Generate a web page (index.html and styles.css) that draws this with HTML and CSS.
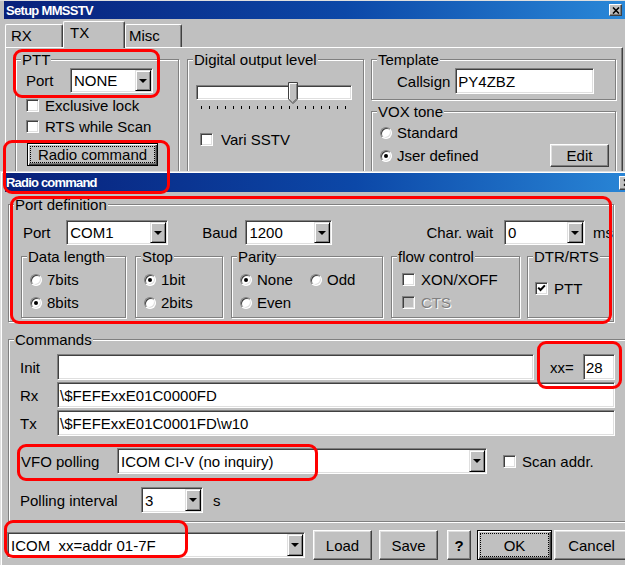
FILE: index.html
```html
<!DOCTYPE html>
<html lang="en">
<head>
    <meta charset="UTF-8">
    <title>Setup MMSSTV - Radio command</title>
    <link rel="stylesheet" href="styles.css">
</head>
<body>
    <!-- back window: Setup MMSSTV, TX tab -->
    <div class="win win-setup">
        <div class="titlebar">
            <span>Setup MMSSTV</span>
            <span class="close">
                <svg width="8" height="7" viewBox="0 0 8 7"><path d="M1 0.5l6 6M7 0.5l-6 6" stroke="#000" stroke-width="1.6"/></svg>
            </span>
        </div>
        <div class="tabs">
            <div class="tab tab-rx">RX</div>
            <div class="tab tab-tx active">TX</div>
            <div class="tab tab-misc">Misc</div>
        </div>
        <div class="panel">
            <fieldset class="grp g-ptt">
                <legend>PTT</legend>
                <div class="gbody">
                    <div class="row h25">
                        <span class="lbl-ptt">Port</span>
                        <div class="combo cb-none"><span class="val">NONE</span><span class="drop"></span></div>
                    </div>
                    <div class="check-row first"><span class="chk"></span><span>Exclusive lock</span></div>
                    <div class="check-row"><span class="chk"></span><span>RTS while Scan</span></div>
                    <div class="btn default btn-radio"><span class="focus">Radio command</span></div>
                </div>
            </fieldset>
            <fieldset class="grp g-level">
                <legend>Digital output level</legend>
                <div class="gbody">
                    <div class="track">
                        <svg class="thumb" width="10" height="22" viewBox="0 0 10 22">
                            <path d="M0.5 0.5H9.5V17L5 21.5L0.5 17Z" fill="#c0c0c0" stroke="#404040"/>
                            <path d="M1.5 17V1.5H8.5" fill="none" stroke="#fff"/>
                            <path d="M8.5 2V16.6L5 20" fill="none" stroke="#808080"/>
                        </svg>
                    </div>
                    <div class="ticks"></div>
                    <div class="check-row vari"><span class="chk"></span><span>Vari SSTV</span></div>
                </div>
            </fieldset>
            <div class="col-right">
                <fieldset class="grp g-template">
                    <legend>Template</legend>
                    <div class="gbody row h26">
                        <span>Callsign</span>
                        <div class="edit ed-call">PY4ZBZ</div>
                    </div>
                </fieldset>
                <fieldset class="grp g-vox">
                    <legend>VOX tone</legend>
                    <div class="gbody">
                        <div class="radio-row"><span class="rad"></span><span>Standard</span></div>
                        <div class="radio-row"><span class="rad on"></span><span>Jser defined</span><div class="btn btn-edit">Edit</div></div>
                    </div>
                </fieldset>
            </div>
        </div>
    </div>

    <!-- front window: Radio command -->
    <div class="win win-radio">
        <div class="titlebar">
            <span>Radio command</span>
            <span class="close">
                <svg width="8" height="7" viewBox="0 0 8 7"><path d="M1 0.5l6 6M7 0.5l-6 6" stroke="#000" stroke-width="1.6"/></svg>
            </span>
        </div>
        <div class="dlg-body">
            <fieldset class="grp g-portdef">
                <legend>Port definition</legend>
                <div class="gbody">
                    <div class="row h25">
                        <span class="lbl-port">Port</span>
                        <div class="combo cb-com"><span class="val">COM1</span><span class="drop"></span></div>
                        <span class="lbl-baud">Baud</span>
                        <div class="combo cb-baud"><span class="val">1200</span><span class="drop"></span></div>
                        <span class="lbl-wait">Char. wait</span>
                        <div class="combo cb-wait"><span class="val">0</span><span class="drop"></span></div>
                        <span class="lbl-ms">ms</span>
                    </div>
                    <div class="subgroups">
                        <fieldset class="grp sub g-data">
                            <legend>Data length</legend>
                            <div class="gbody">
                                <div class="radio-row"><span class="rad"></span><span>7bits</span></div>
                                <div class="radio-row"><span class="rad on"></span><span>8bits</span></div>
                            </div>
                        </fieldset>
                        <fieldset class="grp sub g-stop">
                            <legend>Stop</legend>
                            <div class="gbody">
                                <div class="radio-row"><span class="rad on"></span><span>1bit</span></div>
                                <div class="radio-row"><span class="rad"></span><span>2bits</span></div>
                            </div>
                        </fieldset>
                        <fieldset class="grp sub g-parity">
                            <legend>Parity</legend>
                            <div class="gbody">
                                <div class="radio-row">
                                    <span class="opt-none"><span class="rad on"></span><span>None</span></span>
                                    <span class="rad"></span><span>Odd</span>
                                </div>
                                <div class="radio-row"><span class="rad"></span><span>Even</span></div>
                            </div>
                        </fieldset>
                        <fieldset class="grp sub g-flow">
                            <legend>flow control</legend>
                            <div class="gbody">
                                <div class="radio-row"><span class="chk"></span><span>XON/XOFF</span></div>
                                <div class="radio-row disabled"><span class="chk off"></span><span>CTS</span></div>
                            </div>
                        </fieldset>
                        <fieldset class="grp sub g-dtr">
                            <legend>DTR/RTS</legend>
                            <div class="gbody">
                                <div class="radio-row ptt">
                                    <span class="chk">
                                        <svg width="11" height="11" viewBox="0 0 11 11"><path d="M2.2 4.6l2.3 2.4 4.4-4.6" fill="none" stroke="#000" stroke-width="2"/></svg>
                                    </span>
                                    <span>PTT</span>
                                </div>
                            </div>
                        </fieldset>
                    </div>
                </div>
            </fieldset>

            <fieldset class="grp g-cmd">
                <legend>Commands</legend>
                <div class="gbody">
                    <div class="row h26">
                        <span class="lbl-cmd">Init</span>
                        <div class="edit ed-init"></div>
                        <span class="lbl-xx">xx=</span>
                        <div class="edit ed-xx">28</div>
                    </div>
                    <div class="row h26 next">
                        <span class="lbl-cmd">Rx</span>
                        <div class="edit ed-long">\$FEFExxE01C0000FD</div>
                    </div>
                    <div class="row h26 next">
                        <span class="lbl-cmd">Tx</span>
                        <div class="edit ed-long">\$FEFExxE01C0001FD\w10</div>
                    </div>
                    <div class="row h26 vfo">
                        <span class="lbl-vfo">VFO polling</span>
                        <div class="combo cb-vfo"><span class="val">ICOM CI-V (no inquiry)</span><span class="drop"></span></div>
                        <span class="chk chk-scan"></span>
                        <span>Scan addr.</span>
                    </div>
                    <div class="row h26 poll">
                        <span class="lbl-poll">Polling interval</span>
                        <div class="combo cb-poll"><span class="val">3</span><span class="drop"></span></div>
                        <span class="lbl-s">s</span>
                    </div>
                </div>
            </fieldset>

            <div class="row bottom">
                <div class="combo cb-icom"><span class="val">ICOM  xx=addr 01-7F</span><span class="drop"></span></div>
                <div class="btn btn-load">Load</div>
                <div class="btn btn-save">Save</div>
                <div class="btn btn-help">?</div>
                <div class="btn default btn-ok"><span class="focus">OK</span></div>
                <div class="btn btn-cancel">Cancel</div>
            </div>
        </div>
    </div>

    <!-- red annotation frames -->
    <div class="mark mark-ptt"></div>
    <div class="mark mark-cmd"></div>
    <div class="mark mark-portdef"></div>
    <div class="mark mark-xx"></div>
    <div class="mark mark-vfo"></div>
    <div class="mark mark-icom"></div>
</body>
</html>
```

FILE: styles.css
```css
body {
    margin: 0;
    width: 625px;
    height: 565px;
    overflow: hidden;
    position: relative;
    background: #c0c0c0;
    font-family: "Liberation Sans", Arial, sans-serif;
    font-size: 15px;
    color: #000;
}

/* windows */
.win {
    position: absolute;
    box-sizing: border-box;
    background: #c0c0c0;
}

.win-setup {
    left: 0;
    top: 0;
    width: 630px;
    height: 230px;
    padding: 0 4px;
    border-top: 1px solid #dfdfdf;
}

.win-radio {
    left: 0;
    top: 171px;
    width: 642px;
    height: 420px;
    padding: 1px 0 0 4px;
    border-top: 1px solid #dfdfdf;
    border-left: 1px solid #dfdfdf;
    box-shadow: inset 1px 1px #fff;
    z-index: 2;
}

.titlebar {
    display: flex;
    align-items: center;
    justify-content: space-between;
    height: 18px;
    padding-left: 2px;
    background: linear-gradient(to right, #08207a, #0c48a8 55%, #2a88d8);
    color: #fff;
    font-size: 13px;
    font-weight: bold;
    letter-spacing: -0.7px;
}

.win-radio .titlebar {
    height: 19px;
    padding-left: 1px;
    letter-spacing: -0.8px;
}

.close {
    display: flex;
    align-items: center;
    justify-content: center;
    box-sizing: border-box;
    width: 13px;
    height: 12px;
    margin-right: 4px;
    background: #c0c0c0;
    border: 1px solid;
    border-color: #fff #404040 #404040 #fff;
    box-shadow: inset -1px -1px #808080;
}

.win-radio .close {
    width: 16px;
    height: 14px;
    margin-right: 7px;
}

/* tabs */
.tabs {
    display: flex;
    align-items: flex-end;
    height: 28px;
    padding-left: 1px;
}

.tab {
    box-sizing: border-box;
    height: 23px;
    padding-top: 2px;
    line-height: 17px;
    background: #c0c0c0;
    border-top: 1px solid #fff;
    border-left: 1px solid #fff;
    border-right: 1px solid #404040;
    border-radius: 2px 2px 0 0;
    box-shadow: inset -1px 0 #808080;
}

.tab-rx {
    width: 58px;
    padding-left: 5px;
}

.tab-tx {
    width: 62px;
    padding-left: 6px;
}

.tab-misc {
    width: 57px;
    padding-left: 3px;
}

.tab.active {
    height: 27px;
    margin-bottom: -1px;
    position: relative;
    z-index: 1;
}

.panel {
    display: flex;
    align-items: flex-start;
    height: 180px;
    margin: 0 3px 0 1px;
    padding: 3px 0 0 9px;
    border: 1px solid;
    border-color: #fff #404040 #404040 #fff;
    box-shadow: inset -1px -1px #808080;
}

/* group boxes */
.grp {
    flex: none;
    margin: 0;
    padding: 0;
    min-width: 0;
    box-sizing: border-box;
    border: 1px solid #808080;
    box-shadow: inset 1px 1px #fff, 1px 1px #fff;
}

.grp legend {
    margin-left: 5px;
    padding: 0 1px;
    line-height: 17px;
    background: #c0c0c0;
}

.row {
    display: flex;
    align-items: center;
}

.h25 {
    height: 25px;
}

.h26 {
    height: 26px;
}

/* sunken controls */
.combo, .edit, .track, .chk, .rad {
    box-sizing: border-box;
    background: #fff;
    border: 1px solid;
    border-color: #808080 #fff #fff #808080;
    box-shadow: inset 1px 1px #404040, inset -1px -1px #dfdfdf;
}

.combo {
    display: flex;
    flex: none;
    padding: 1px;
}

.combo .val {
    flex: 1;
    display: flex;
    align-items: center;
    padding-left: 2px;
    white-space: pre;
}

.drop {
    display: flex;
    align-items: center;
    justify-content: center;
    box-sizing: border-box;
    width: 16px;
    background: #c0c0c0;
    border: 1px solid;
    border-color: #dfdfdf #000 #000 #dfdfdf;
    box-shadow: inset 1px 1px #fff, inset -1px -1px #808080;
}

.drop::after {
    content: "";
    border-style: solid;
    border-width: 4px 4px 0;
    border-color: #000 transparent transparent;
}

.edit {
    display: flex;
    align-items: center;
    flex: none;
    height: 26px;
    padding-left: 2px;
}

.chk {
    display: flex;
    align-items: center;
    justify-content: center;
    flex: none;
    width: 13px;
    height: 13px;
    margin-right: 6px;
}

.chk.off {
    background: #c0c0c0;
}

.rad {
    display: flex;
    align-items: center;
    justify-content: center;
    flex: none;
    width: 12px;
    height: 12px;
    margin-right: 5px;
    border-radius: 50%;
}

.rad.on::after {
    content: "";
    width: 4px;
    height: 4px;
    border-radius: 50%;
    background: #000;
}

.check-row, .radio-row {
    display: flex;
    align-items: center;
}

.check-row {
    height: 21px;
}

.radio-row {
    height: 23px;
}

.disabled {
    color: #808080;
    text-shadow: 1px 1px #fff;
}

/* buttons */
.btn {
    display: flex;
    align-items: center;
    justify-content: center;
    flex: none;
    box-sizing: border-box;
    background: #c0c0c0;
    border: 1px solid;
    border-color: #fff #404040 #404040 #fff;
    box-shadow: inset -1px -1px #808080, inset 1px 1px #dfdfdf;
}

.btn.default {
    align-items: stretch;
    padding: 2px;
    border-color: #000;
    box-shadow: inset 1px 1px #fff, inset -1px -1px #404040, inset -2px -2px #808080;
}

.focus {
    flex: 1;
    display: flex;
    align-items: center;
    justify-content: center;
    border: 1px dotted #000;
}

/* Setup: PTT */
.g-ptt {
    width: 164px;
    height: 160px;
}

.g-ptt .gbody {
    padding-left: 10px;
}

.lbl-ptt {
    width: 44px;
}

.cb-none {
    width: 83px;
    height: 25px;
}

.check-row.first {
    margin-top: 2px;
}

.btn-radio {
    width: 131px;
    height: 23px;
    margin: 6px 0 0 1px;
}

/* Setup: level */
.g-level {
    width: 177px;
    height: 160px;
    margin-left: 8px;
}

.g-level .gbody {
    padding-left: 8px;
}

.track {
    position: relative;
    width: 156px;
    height: 15px;
    margin-top: 17px;
}

.thumb {
    position: absolute;
    left: 91px;
    top: -4px;
}

.ticks {
    width: 145px;
    height: 3px;
    margin: 6px 0 0 5px;
    background: repeating-linear-gradient(to right, #000 0 1px, transparent 1px 8px);
}

.check-row.vari {
    margin: 20px 0 0 4px;
}

.check-row.vari .chk {
    margin-right: 8px;
}

/* Setup: right column */
.col-right {
    display: flex;
    flex-direction: column;
    width: 245px;
    margin-left: 7px;
}

.g-template .gbody {
    padding: 0 0 5px 25px;
}

.ed-call {
    width: 139px;
    margin-left: 5px;
}

.g-vox {
    height: 90px;
    margin-top: 3px;
}

.g-vox .gbody {
    padding: 1px 0 0 8px;
}

.btn-edit {
    width: 59px;
    height: 23px;
    margin: 0 6px 0 auto;
}

/* Radio command dialog */
.dlg-body {
    padding: 4px 0 0 3px;
}

.g-portdef {
    width: 606px;
}

.g-portdef > .gbody {
    padding: 7px 0 3px 12px;
}

.lbl-port {
    width: 44px;
    margin-left: 2px;
}

.cb-com {
    width: 102px;
    height: 25px;
}

.lbl-baud {
    width: 44px;
    margin-left: 34px;
}

.cb-baud {
    width: 87px;
    height: 25px;
}

.lbl-wait {
    width: 79px;
    margin-left: 94px;
}

.cb-wait {
    width: 81px;
    height: 25px;
}

.lbl-ms {
    margin-left: 8px;
}

.subgroups {
    display: flex;
    margin-top: 3px;
}

.sub .gbody {
    padding: 3px 0 3px 8px;
}

.g-data {
    width: 105px;
}

.g-stop {
    width: 88px;
    margin-left: 9px;
}

.g-parity {
    width: 152px;
    margin-left: 8px;
}

.opt-none {
    display: flex;
    align-items: center;
    width: 70px;
}

.g-flow {
    width: 129px;
    margin-left: 8px;
}

.g-flow .gbody {
    padding-left: 10px;
}

.g-dtr {
    width: 84px;
    margin-left: 7px;
}

.g-dtr .gbody {
    padding-left: 7px;
}

.radio-row.ptt {
    margin-top: 9px;
}

/* commands */
.g-cmd {
    width: 640px;
    margin-top: 9px;
}

.g-cmd .gbody {
    padding: 6px 0 8px 11px;
}

.row.next {
    margin-top: 2px;
}

.lbl-cmd {
    width: 37px;
}

.ed-init {
    width: 477px;
}

.lbl-xx {
    width: 33px;
    margin-left: 16px;
}

.ed-xx {
    width: 32px;
}

.ed-long {
    width: 558px;
}

.row.vfo {
    margin-top: 12px;
}

.lbl-vfo {
    width: 96px;
    margin-left: 1px;
}

.cb-vfo {
    width: 370px;
    height: 26px;
}

.chk-scan {
    margin-left: 16px;
}

.row.poll {
    margin-top: 13px;
}

.lbl-poll {
    width: 121px;
}

.cb-poll {
    width: 62px;
    height: 26px;
}

.lbl-s {
    margin-left: 10px;
}

/* bottom buttons */
.row.bottom {
    height: 30px;
    margin-top: 8px;
}

.cb-icom {
    width: 298px;
    height: 26px;
    margin-left: -1px;
}

.btn-load, .btn-save {
    width: 59px;
    height: 30px;
}

.btn-load {
    margin-left: 8px;
}

.btn-save {
    margin-left: 7px;
}

.btn-help {
    width: 24px;
    height: 30px;
    margin-left: 9px;
    font-weight: bold;
}

.btn-ok {
    width: 75px;
    height: 30px;
    margin-left: 6px;
}

.btn-cancel {
    width: 75px;
    height: 30px;
    margin-left: 2px;
}

/* red annotation frames */
.mark {
    position: absolute;
    z-index: 5;
    box-sizing: border-box;
    border: 3px solid #f00;
    border-radius: 9px;
}

.mark-ptt {
    left: 13px;
    top: 49px;
    width: 147px;
    height: 49px;
}

.mark-cmd {
    left: 3px;
    top: 140px;
    width: 167px;
    height: 54px;
}

.mark-portdef {
    left: 10px;
    top: 196px;
    width: 602px;
    height: 128px;
}

.mark-xx {
    left: 537px;
    top: 341px;
    width: 85px;
    height: 48px;
}

.mark-vfo {
    left: 17px;
    top: 444px;
    width: 301px;
    height: 37px;
}

.mark-icom {
    left: 4px;
    top: 520px;
    width: 184px;
    height: 38px;
}
```
